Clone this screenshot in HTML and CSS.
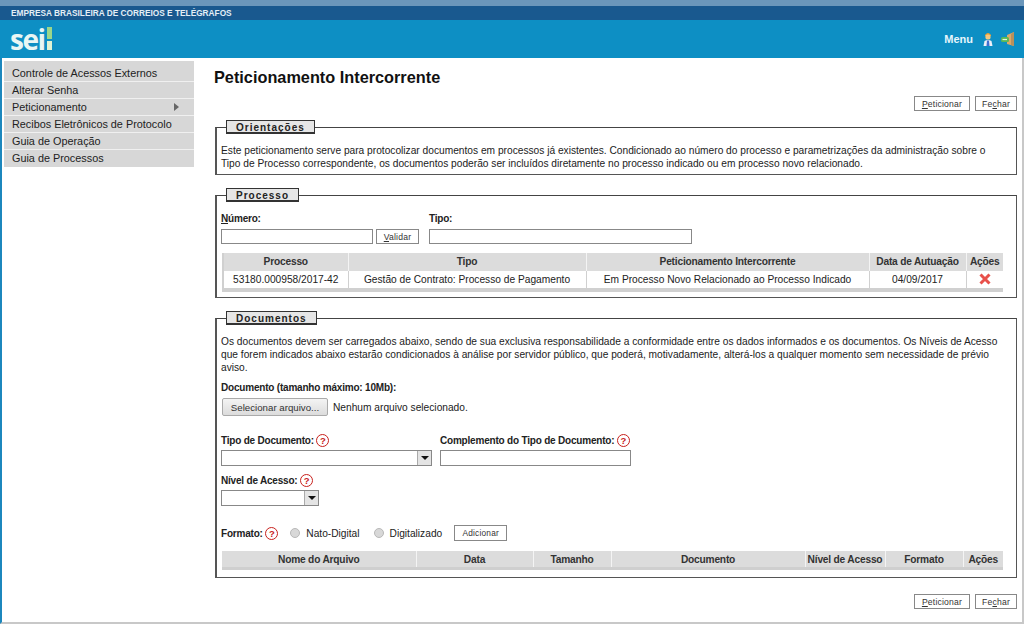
FILE: index.html
```html
<!doctype html>
<html lang="pt-BR">
  <head>
    <meta charset="UTF-8" />
    <title>Peticionamento Intercorrente</title>
    <link rel="stylesheet" href="styles.css">
  </head>
  <body>
    <div class="page">
      <div class="bar-top"></div>
      <div class="bar-org">EMPRESA BRASILEIRA DE CORREIOS E TELÉGRAFOS</div>
      <div class="bar-system">
        <div class="logo">sei<span class="logo-bang"></span></div>
        <div class="bar-menu">
          <span class="menu-label">Menu</span>
          <svg class="bar-icon" viewBox="0 0 16 16">
            <path d="M5 4 Q8 0 11 4 L11 5 L5 5 Z" fill="#f0a030"/>
            <circle cx="8" cy="6" r="2.6" fill="#f4c880"/>
            <path d="M3.5 15 L4.5 10 Q8 8 11.5 10 L12.5 15 Z" fill="#eef0f8"/>
            <path d="M7 9.5 L9 9.5 L9.5 15 L6.5 15 Z" fill="#3f6fd0"/>
          </svg>
          <svg class="bar-icon" viewBox="0 0 16 16">
            <path d="M7 4 L14 1 L14 15 L7 13 Z" fill="#dca868"/>
            <path d="M11 3 L14 1 L14 15 L11 14 Z" fill="#b8905c"/>
            <rect x="1" y="6" width="8" height="5" rx="1.5" fill="#58b858"/>
            <path d="M2.5 8.5 L7 8.5" stroke="#e4f6dc" stroke-width="1.2"/>
          </svg>
        </div>
      </div>

      <div class="content">
        <ul class="side-menu">
          <li>Controle de Acessos Externos</li>
          <li>Alterar Senha</li>
          <li class="has-sub">Peticionamento<span class="sub-arrow"></span></li>
          <li>Recibos Eletrônicos de Protocolo</li>
          <li>Guia de Operação</li>
          <li>Guia de Processos</li>
        </ul>

        <div class="main">
          <h1>Peticionamento Intercorrente</h1>
          <div class="actions">
            <button class="btn"><u>P</u>eticionar</button>
            <button class="btn">Fe<u>c</u>har</button>
          </div>

          <fieldset class="box box-orient">
            <legend>Orientações</legend>
            <p>Este peticionamento serve para protocolizar documentos em processos já existentes. Condicionado ao número do processo e parametrizações da administração sobre o Tipo de Processo correspondente, os documentos poderão ser incluídos diretamente no processo indicado ou em processo novo relacionado.</p>
          </fieldset>

          <fieldset class="box box-proc">
            <legend>Processo</legend>
            <div class="proc-row">
              <div class="field">
                <label><u>N</u>úmero:</label>
                <div class="field-line">
                  <input class="input input-num" type="text" />
                  <button class="btn btn-validar"><u>V</u>alidar</button>
                </div>
              </div>
              <div class="field">
                <label>Tipo:</label>
                <input class="input input-tipo" type="text" />
              </div>
            </div>
            <table class="grid grid-proc">
              <tr>
                <th class="c-proc">Processo</th>
                <th class="c-tipo">Tipo</th>
                <th class="c-pet">Peticionamento Intercorrente</th>
                <th class="c-data">Data de Autuação</th>
                <th>Ações</th>
              </tr>
              <tr>
                <td>53180.000958/2017-42</td>
                <td>Gestão de Contrato: Processo de Pagamento</td>
                <td>Em Processo Novo Relacionado ao Processo Indicado</td>
                <td>04/09/2017</td>
                <td>
                  <svg class="icon-x" viewBox="0 0 14 14">
                    <path d="M2.5 2.5 L11.5 11.5 M11.5 2.5 L2.5 11.5" stroke="#e8504a" stroke-width="3"/>
                  </svg>
                </td>
              </tr>
            </table>
          </fieldset>

          <fieldset class="box box-docs">
            <legend>Documentos</legend>
            <p>Os documentos devem ser carregados abaixo, sendo de sua exclusiva responsabilidade a conformidade entre os dados informados e os documentos. Os Níveis de Acesso que forem indicados abaixo estarão condicionados à análise por servidor público, que poderá, motivadamente, alterá-los a qualquer momento sem necessidade de prévio aviso.</p>
            <label class="doc-label">Documento (tamanho máximo: 10Mb):</label>
            <div class="file-row">
              <button class="btn-file">Selecionar arquivo...</button>
              <span>Nenhum arquivo selecionado.</span>
            </div>
            <div class="doc-row">
              <div class="field">
                <label>Tipo de Documento: <span class="help">?</span></label>
                <div class="select select-tipo"><span class="select-arrow"></span></div>
              </div>
              <div class="field">
                <label>Complemento do Tipo de Documento: <span class="help">?</span></label>
                <input class="input input-comp" type="text" />
              </div>
            </div>
            <div class="field field-nivel">
              <label>Nível de Acesso: <span class="help">?</span></label>
              <div class="select select-nivel"><span class="select-arrow"></span></div>
            </div>
            <div class="format-row">
              <label>Formato: <span class="help">?</span></label>
              <span class="radio"></span><span class="radio-text">Nato-Digital</span>
              <span class="radio"></span><span class="radio-text">Digitalizado</span>
              <button class="btn btn-add">Adicionar</button>
            </div>
            <table class="grid grid-docs">
              <tr>
                <th class="d-nome">Nome do Arquivo</th>
                <th class="d-data">Data</th>
                <th class="d-tam">Tamanho</th>
                <th class="d-doc">Documento</th>
                <th class="d-nivel">Nível de Acesso</th>
                <th class="d-form">Formato</th>
                <th>Ações</th>
              </tr>
            </table>
          </fieldset>

          <div class="actions actions-bottom">
            <button class="btn"><u>P</u>eticionar</button>
            <button class="btn">Fe<u>c</u>har</button>
          </div>
        </div>
      </div>
    </div>
  </body>
</html>
```

FILE: styles.css
```css
* {
  box-sizing: border-box;
}
html,
body {
  margin: 0;
  height: 100%;
}
body {
  font-family: "Liberation Sans", Arial, sans-serif;
  font-size: 10.2px;
  color: #222;
  background-color: #fff;
  overflow: hidden;
}
.page {
  height: 624px;
  border-left: 2px solid #1c87bd;
  border-right: 2px solid #c8c8c8;
  border-bottom: 2px solid #c8c8c8;
}
.bar-top {
  height: 6px;
  margin: 0 -2px;
  background-color: #6b97bb;
}
.bar-org {
  height: 14px;
  line-height: 15px;
  margin: 0 -2px;
  padding-left: 11px;
  background-color: #19598f;
  color: #e4eef6;
  font-size: 8.3px;
  font-weight: bold;
}
.bar-system {
  height: 38px;
  margin: 0 -2px;
  padding: 0 8px 0 10px;
  background-color: #0d8fc4;
  display: flex;
  justify-content: space-between;
  align-items: center;
}
.logo {
  font-size: 28px;
  line-height: 28px;
  font-weight: bold;
  letter-spacing: -1.5px;
  color: #e8f6f4;
  display: flex;
  align-items: flex-end;
  font-family: "Open Sans", sans-serif;
}
.logo-bang {
  width: 5px;
  height: 23px;
  margin-left: 2px;
  margin-bottom: 3px;
  background: linear-gradient(#9bd68a 0 52%, transparent 52% 62%, #e0f2d4 62%);
}
.bar-menu {
  display: flex;
  align-items: center;
  gap: 4px;
}
.menu-label {
  color: #e6f6fc;
  font-size: 11px;
  font-weight: bold;
  margin-right: 3px;
}
.bar-icon {
  width: 16px;
  height: 16px;
}
.content {
  display: flex;
}
.side-menu {
  list-style: none;
  width: 190px;
  margin: 3px 0 0 2px;
  padding: 4px 0 0;
  flex: none;
  align-self: flex-start;
  background-color: #d7d7d7;
}
.side-menu li {
  position: relative;
  height: 17px;
  line-height: 16px;
  padding-left: 8px;
  background-color: #d7d7d7;
  border-bottom: 1px solid #f0f0f0;
  color: #222;
  font-size: 10.85px;
}
.side-menu li:last-child {
  border-bottom: 0;
}
.sub-arrow {
  position: absolute;
  left: 170px;
  top: 4px;
  border-left: 5px solid #666;
  border-top: 4px solid transparent;
  border-bottom: 4px solid transparent;
}
.main {
  margin-left: 20px;
  width: 803px;
}
h1 {
  margin: 10px 0 0;
  height: 19px;
  font-size: 16.3px;
  line-height: 19px;
  font-weight: bold;
  color: #111;
}
.actions {
  display: flex;
  justify-content: flex-end;
  gap: 5px;
  margin-top: 9px;
}
.btn {
  height: 15px;
  width: 56px;
  padding: 0;
  font-family: inherit;
  font-size: 8.6px;
  color: #333;
  background-color: #fff;
  border: 1px solid #888;
  letter-spacing: 0.2px;
}
.actions .btn:last-child {
  width: 42px;
}
.box {
  margin: 0 0 0 1px;
  padding: 0 5px 0 4px;
  width: 802px;
  border: 1px solid #555;
  border-left-width: 2px;
  border-top-color: #444;
}
.box legend {
  margin-left: 5px;
  padding: 0 9px;
  height: 14px;
  line-height: 13px;
  background-color: #e6e6e6;
  border: 1px solid #333;
  border-bottom-width: 2px;
  font-size: 10px;
  font-weight: bold;
  letter-spacing: 1px;
  color: #222;
}
.box p {
  margin: 0;
  line-height: 13px;
}
.box-orient {
  margin-top: 9px;
  height: 55px;
}
.box-orient p {
  padding: 10px 20px 0 0;
}
.box-proc {
  margin-top: 13px;
  height: 110px;
}
.proc-row {
  display: flex;
  gap: 10px;
  padding-top: 10px;
}
.field label {
  display: block;
  font-size: 10px;
  letter-spacing: -0.2px;
  font-weight: bold;
  height: 17px;
  line-height: 13px;
  color: #222;
}
.field-line {
  display: flex;
  gap: 3px;
}
.input {
  display: block;
  height: 15px;
  border: 1px solid #888;
  background-color: #fff;
  padding: 0;
}
.input-num {
  width: 152px;
}
.input-tipo {
  width: 263px;
}
.btn-validar {
  width: 43px;
}
.grid {
  width: 781px;
  margin-left: 1px;
  border-collapse: collapse;
  table-layout: fixed;
  background-color: #d9d9d9;
}
.grid-proc {
  margin-top: 9px;
  height: 39px;
  border-bottom: 4px solid #d0d0d0;
  border-left: 2px solid #d0d0d0;
}
.grid th {
  height: 17px;
  padding: 0;
  font-size: 10.2px;
  letter-spacing: -0.2px;
  font-weight: bold;
  color: #333;
  background-color: #dcdcdc;
  border-left: 1px solid #f4f4f4;
  text-align: center;
  white-space: nowrap;
}
.grid th:first-child {
  border-left: 0;
}
.grid td {
  height: 18px;
  padding: 0;
  text-align: center;
  background-color: #fff;
  border-left: 1px solid #d0d0d0;
}
.grid td:first-child {
  border-left: 0;
}
.c-proc {
  width: 125px;
}
.c-tipo {
  width: 238px;
}
.c-pet {
  width: 283px;
}
.c-data {
  width: 97px;
}
.icon-x {
  display: block;
  width: 14px;
  height: 14px;
  margin: 0 auto;
}
.box-docs {
  margin-top: 13px;
  height: 267px;
}
.box-docs p {
  padding-top: 10px;
}
.doc-label {
  display: block;
  margin-top: 7px;
  font-size: 10px;
  letter-spacing: -0.2px;
  font-weight: bold;
  line-height: 13px;
}
.file-row {
  display: flex;
  align-items: center;
  gap: 5px;
  margin-top: 4px;
}
.btn-file {
  width: 106px;
  height: 18px;
  margin-left: 1px;
  padding: 0;
  font-family: inherit;
  font-size: 9.7px;
  color: #333;
  background: linear-gradient(#f4f4f4, #dcdcdc);
  border: 1px solid #aaa;
  border-radius: 2px;
}
.doc-row {
  display: flex;
  gap: 8px;
  margin-top: 18px;
}
.field-nivel {
  margin-top: 8px;
}
.help {
  display: inline-block;
  width: 13px;
  height: 13px;
  border: 1px solid #c8201c;
  border-radius: 50%;
  color: #c8201c;
  font-size: 9.5px;
  letter-spacing: 0;
  line-height: 11px;
  text-align: center;
  font-weight: bold;
  background-color: #fff;
}
.field-nivel label,
.doc-row .field label {
  height: 16px;
}
.select {
  position: relative;
  height: 16px;
  border: 1px solid #888;
  background-color: #fff;
}
.select-tipo {
  width: 211px;
}
.select-nivel {
  width: 98px;
}
.select-arrow {
  position: absolute;
  right: 0;
  top: 0;
  width: 14px;
  height: 14px;
  background-color: #e4e4e4;
  border-left: 1px solid #aaa;
}
.select-arrow::after {
  content: "";
  position: absolute;
  left: 3px;
  top: 5px;
  border-top: 4px solid #111;
  border-left: 4px solid transparent;
  border-right: 4px solid transparent;
}
.input-comp {
  width: 191px;
  height: 16px;
}
.format-row {
  display: flex;
  align-items: center;
  margin-top: 19px;
  height: 16px;
}
.format-row label {
  font-size: 10px;
  letter-spacing: -0.2px;
  font-weight: bold;
  margin-right: -2px;
}
.radio {
  width: 10px;
  height: 10px;
  border-radius: 50%;
  margin-left: 14px;
  border: 1px solid #b8b8b8;
  background-color: #d8d8d8;
}
.radio-text {
  margin-left: 6px;
}
.btn-add {
  width: 53px;
  height: 16px;
  margin-left: 12px;
  font-size: 8.3px;
}
.grid-docs {
  margin-top: 10px;
  height: 19px;
  border-bottom: 3px solid #cfcfcf;
}
.grid-docs th {
  height: 16px;
}
.d-nome {
  width: 194px;
}
.d-data {
  width: 117px;
}
.d-tam {
  width: 78px;
}
.d-doc {
  width: 194px;
}
.d-nivel {
  width: 80px;
}
.d-form {
  width: 78px;
}
.actions-bottom {
  margin-top: 16px;
}
```
